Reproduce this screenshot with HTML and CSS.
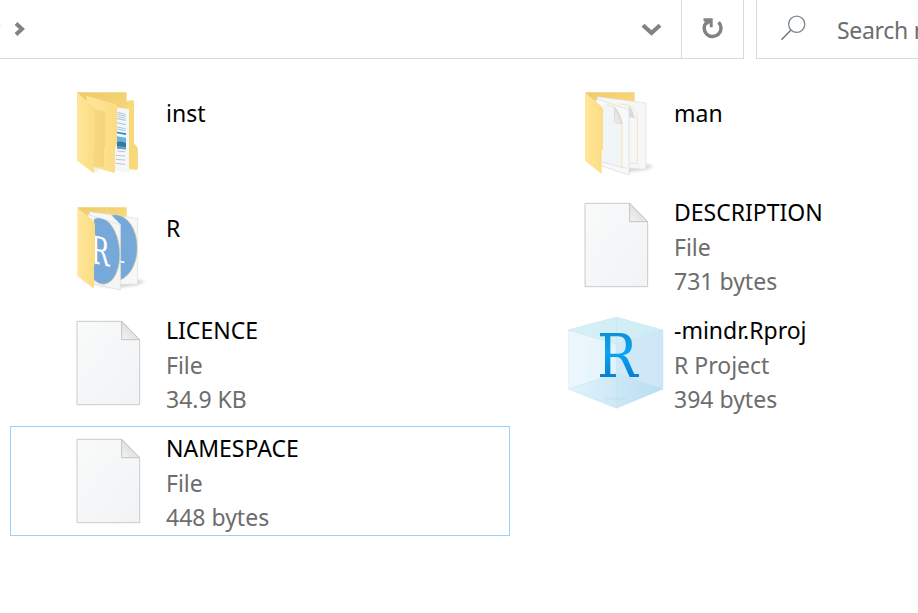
FILE: index.html
```html
<!DOCTYPE html>
<html lang="en">
<head>
<meta charset="utf-8">
<title>Files</title>
<link rel="stylesheet" href="styles.css">
</head>
<body>
<svg class="defs" aria-hidden="true">
  <defs>
    <linearGradient id="front" x1="0" y1="0" x2="1" y2="0"><stop offset="0" stop-color="#ffe69b"/><stop offset="1" stop-color="#fbdc82"/></linearGradient>
    <linearGradient id="back" x1="0" y1="0" x2="1" y2="1"><stop offset="0" stop-color="#edcb6a"/><stop offset="1" stop-color="#fbde85"/></linearGradient>
    <linearGradient id="paper" x1="0" y1="0" x2="1" y2="1"><stop offset="0" stop-color="#f9fafa"/><stop offset="1" stop-color="#f1f3f5"/></linearGradient>
    <linearGradient id="fold" x1="0" y1="1" x2=".6" y2=".3"><stop offset="0" stop-color="#f4f4f4"/><stop offset="1" stop-color="#dcdcdc"/></linearGradient>
    <linearGradient id="blue" x1="0" y1="0" x2="0" y2="1"><stop offset="0" stop-color="#1583cc"/><stop offset=".45" stop-color="#08a5f2"/><stop offset="1" stop-color="#0868c4"/></linearGradient>
    <linearGradient id="glass" x1="0" y1="0" x2="1" y2="0"><stop offset="0" stop-color="#edf8fd"/><stop offset="1" stop-color="#d9eff9"/></linearGradient>
    <linearGradient id="floor" x1="0" y1="0" x2="1" y2="0"><stop offset="0" stop-color="#dff2fa"/><stop offset="1" stop-color="#b5dcf1"/></linearGradient>
    <linearGradient id="mirror" x1="0" y1="1" x2="0" y2="0"><stop offset=".45" stop-color="#5fa9d8" stop-opacity="0"/><stop offset="1" stop-color="#3f93cd" stop-opacity=".85"/></linearGradient>
    <filter id="soft" x="-30%" y="-50%" width="160%" height="200%"><feGaussianBlur stdDeviation="4"/></filter>
    <clipPath id="sheet1"><path d="M87 64 166 89V285L87 267z"/></clipPath>
    <clipPath id="sheet2"><path d="M135 56 218 70V267L166 270V88z"/></clipPath>
    <clipPath id="floorclip"><path d="M100 231H260V284H100z"/></clipPath>
    <symbol id="file" viewBox="-6 21 288 288">
      <path d="M45 40H179L233 95V290H45z" fill="url(#paper)" stroke="#c9cacb" stroke-width="3"/>
      <path d="M179 40V95H233z" fill="url(#fold)" stroke="#c3c3c3" stroke-width="3"/>
    </symbol>
  </defs>
</svg>

<header class="toolbar">
  <div class="address">
    <svg class="crumb" viewBox="0 0 30 58"><path d="M16 23.5 22 29 16 34.5" fill="none" stroke="#828282" stroke-width="4"/><path d="M0 25.5H1" stroke="#ddd"/></svg>
    <svg class="expand" viewBox="0 0 60 58"><path d="M22 25.3 30.5 33 39 25.3" fill="none" stroke="#828282" stroke-width="4.2"/></svg>
    <div class="refresh">
      <svg viewBox="0 0 61 58"><path d="M36.6 22.3A8.4 8.4 0 1 1 24.5 22.4" fill="none" stroke="#828282" stroke-width="3.5"/><path d="M21.5 18.2H30.7V27.2H27.7V23.2L24.2 25.5 22.5 21.2H21.5z" fill="#828282"/></svg>
    </div>
  </div>
  <div class="search">
    <svg viewBox="0 0 80 58"><circle cx="43.7" cy="24.2" r="8.1" fill="none" stroke="#7d8791" stroke-width="1.3"/><path d="M38 30 28.5 39.7" stroke="#77706a" stroke-width="1.4"/></svg>
    <span>Search mindr</span>
  </div>
</header>

<main class="files">
  <div class="item folder">
    <svg class="icon" viewBox="-15 6 288 288">
      <path d="M37 37H185V65L206 64V190L218 204V268L150 270 37 242z" fill="url(#back)"/>
      <path d="M185 62 204 61Q207 61 207 66V189L218 204V265Q218 269 213 269L190 265z" fill="#f8d979"/>
      <path d="M150 82 192 87V278L146 271z" fill="#f5f6f8"/>
      <g fill="none" stroke="#9eabb5" stroke-width="2"><path d="M157 97 182 103M157 110 182 115M157 141 182 146M157 213 180 215M152 226 180 228M152 238 180 240M152 250 180 253"/><path d="M157 103 182 109M157 116 182 121M157 128 182 134M157 147 182 152" stroke="#5eb0df"/></g>
      <path d="M156 155 183 160V165L156 160z" fill="#168bc4"/>
      <path d="M156 169 183 173V208L156 206z" fill="#67b5e5"/>
      <path d="M156 187Q168 181 183 190V208L156 206z" fill="#3a7899"/><path d="M156 198 183 201V208L156 206z" fill="#61a5cf"/>
      <path d="M87 255 106 270 87 279z" fill="#f2f2f2"/>
      <path d="M64 47 152 73Q156 74 156 80V190L150 206V274Q150 279 145 278L87 262z" fill="url(#front)"/>
      <path d="M83 88 122 94V190L117 211V262L87 261z" fill="#efce70" opacity=".55"/>
      <path d="M37 38 84 78Q90 83 90 91V205L87 213V280L37 243z" fill="url(#front)"/>
    </svg>
    <div class="text"><div class="name inst">inst</div></div>
  </div>
  <div class="item folder">
    <svg class="icon" viewBox="-6 6 288 288">
      <path d="M130 270 230 253 252 259 225 270 177 276z" fill="#000" opacity=".16" filter="url(#soft)"/>
      <path d="M45 37H194V100H100z" fill="url(#back)"/>
      <path d="M82 50 228 69V269L95 255z" fill="#f6f7f8" stroke="#dddedf" stroke-width="2"/>
      <path d="M145 72 176 75Q193 82 202 108V255" fill="none" stroke="#f5dc9b" stroke-width="2"/>
      <path d="M176 75Q190 93 193 110L202 115 177 112z" fill="#d9dadb"/>
      <path d="M78 56 177 89V285L92 257z" fill="#f8f9fa" stroke="#d8d9da" stroke-width="2"/>
      <path d="M98 72 132 80 156 130V265L98 248z" fill="#f2f5f7"/>
      <path d="M110 74 134 81Q148 94 156 128V265" fill="none" stroke="#f7dda0" stroke-width="2.5"/>
      <path d="M133 82Q134 112 133 127L156 131Q151 103 133 82z" fill="url(#fold)" stroke="#cecece" stroke-width="2"/>
      <path d="M97 246 170 265M180 250H199" fill="none" stroke="#d9dadc" stroke-width="2"/>
      <path d="M45 38 93 78Q99 83 99 91V207L95 213V281L45 243z" fill="url(#front)"/>
    </svg>
    <div class="text"><div class="name man">man</div></div>
  </div>
  <div class="item folder">
    <svg class="icon" viewBox="-15 6 288 288">
      <path d="M90 272 215 254 242 259 216 270 166 278z" fill="#000" opacity=".17" filter="url(#soft)"/>
      <path d="M37 37H185V100H87z" fill="url(#back)"/>
      <path d="M73 50 218 70V267L87 270z" fill="#f6f7f8" stroke="#dedede" stroke-width="2"/>
      <g clip-path="url(#sheet2)"><ellipse cx="151" cy="158" rx="66" ry="99" fill="#76a9da" stroke="#e6cf91" stroke-width="2"/></g>
      <path d="M166 200 178 202" stroke="#fff" stroke-width="5"/>
      <path d="M68 58 166 89V285L87 267z" fill="#f4f5f7" stroke="#dcdddd" stroke-width="2"/>
      <g clip-path="url(#sheet1)"><ellipse cx="109" cy="168" rx="55" ry="100" transform="rotate(-5 109 168)" fill="#76a9da" stroke="#e6cf91" stroke-width="2"/>
      <text class="sheet-r" transform="translate(78 203) skewY(12)" textLength="55" lengthAdjust="spacingAndGlyphs">R</text></g>
      <path d="M37 38 82 74Q90 80 90 91V205L87 213V281L37 243z" fill="url(#front)"/>
    </svg>
    <div class="text"><div class="name r">R</div></div>
  </div>
  <div class="item">
    <svg class="icon"><use href="#file"/></svg>
    <div class="text"><div class="name description">DESCRIPTION</div><div class="file-type">File</div><div class="bytes">731 bytes</div></div>
  </div>
  <div class="item">
    <svg class="icon"><use href="#file"/></svg>
    <div class="text"><div class="name licence">LICENCE</div><div class="file-type">File</div><div class="kb">34.9 KB</div></div>
  </div>
  <div class="item">
    <svg class="icon" viewBox="39 30 288 288">
      <path d="M184 36 324 75V252L184 310 39 252V75z" fill="url(#glass)"/>
      <path d="M184 117 324 75V252L184 310z" fill="#cae4f6" opacity=".75"/>
      <path d="M39 252 184 205 324 252 184 310z" fill="url(#floor)" opacity=".85"/>
      <path d="M39 75 184 36 324 75 184 117z" fill="#c9ebf3" opacity=".65"/>
      <path d="M39 75 184 36 324 75 184 117zM184 36V310M39 75V252L184 310 324 252V75M39 252 184 205 324 252" fill="none" stroke="#b9e0ea" stroke-width="1.5" opacity=".65"/>
      <g clip-path="url(#floorclip)"><text class="cube-r" transform="translate(126 231) scale(1 -.8)" textLength="122" lengthAdjust="spacingAndGlyphs" fill="url(#mirror)">R</text></g>
      <text class="cube-r" x="126" y="216" textLength="122" lengthAdjust="spacingAndGlyphs" fill="url(#blue)">R</text>
    </svg>
    <div class="text"><div class="name rproj">-mindr.Rproj</div><div class="project">R Project</div><div class="bytes">394 bytes</div></div>
  </div>
  <div class="item selected">
    <svg class="icon"><use href="#file"/></svg>
    <div class="text"><div class="name namespace">NAMESPACE</div><div class="file-type">File</div><div class="bytes">448 bytes</div></div>
  </div>
</main>
</body>
</html>
```
FILE: styles.css
```css
* { box-sizing: border-box; }
body {
  margin: 0;
  width: 918px;
  height: 613px;
  overflow: hidden;
  background: #fff;
  color: #6d6d6d;
  font-family: "Noto Sans", "Open Sans", sans-serif;
  font-size: 23px;
}
svg { display: block; flex: none; }
.defs { width: 0; height: 0; position: absolute; }
.toolbar { display: flex; gap: 12px; height: 59px; }
.address {
  display: flex;
  width: 744px;
  flex: none;
  border: solid #d9d9d9;
  border-width: 0 1px 1px 0;
}
.crumb { width: 30px; height: 58px; }
.expand { width: 60px; height: 58px; margin-left: auto; }
.refresh { width: 62px; border-left: 1px solid #d9d9d9; }
.refresh svg { width: 61px; height: 58px; }
.search {
  display: flex;
  flex: none;
  width: 240px;
  border: solid #d9d9d9;
  border-width: 0 0 1px 1px;
  line-height: 60px;
  white-space: nowrap;
}
.search svg { width: 80px; height: 58px; margin-left: -4px; }
.search span { margin-left: 4px; letter-spacing: -.3px; }
.files {
  display: grid;
  grid-template-columns: 500px 500px;
  grid-template-rows: 107px 110px 110px 110px;
  gap: 8px;
  padding: 16px 0 0 10px;
}
.item {
  display: flex;
  gap: 10px;
  padding: 7px 0 0 50px;
}
.selected { padding: 6px 0 0 49px; border: 1px solid #99d1ff; }
.icon { width: 96px; height: 96px; }
.text { margin-top: -2px; line-height: 34.5px; white-space: nowrap; }
.folder .text { margin-top: 14px; }
.name { color: #000; }
.sheet-r { font: 115px "DejaVu Serif", serif; fill: #fff; }
.cube-r { font: 177px "DejaVu Serif", serif; }
```
